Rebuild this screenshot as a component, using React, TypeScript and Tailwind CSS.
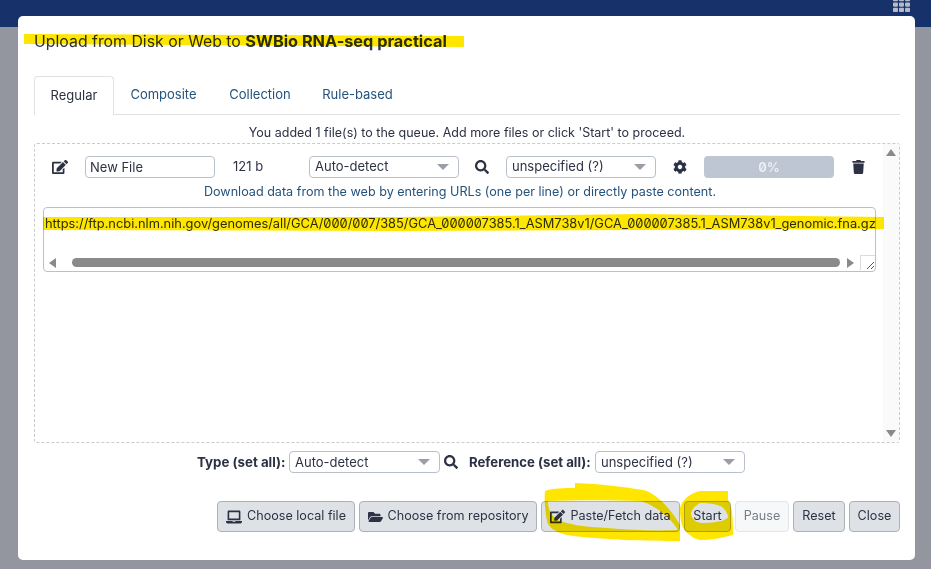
import { FaEdit, FaSearch, FaCog, FaTrash, FaLaptop, FaFolderOpen, FaTh } from 'react-icons/fa';

const Select = ({ label, className }: { label: string; className: string }) => (
  <div className={`flex items-center justify-between border border-[#b9c0ca] rounded-[4px] pl-[5px] pr-[9px] bg-white text-[13px] text-[#2c3143] ${className}`}>
    <span className="pt-[1px]">{label}</span>
    <span className="w-0 h-0 border-l-[6px] border-r-[6px] border-t-[6px] border-l-transparent border-r-transparent border-t-[#9a9ea6]" />
  </div>
);

const Button = ({ icon, label, disabled, className }: { icon?: React.ReactNode; label: string; disabled?: boolean; className: string }) => (
  <button
    className={`h-[31px] flex items-center justify-center gap-[5px] rounded-[4px] border text-[12.6px] ${
      disabled ? 'bg-[#f7f8f9] border-[#e2e5ea] text-[#787d8a]' : 'bg-[#dee2e6] border-[#adb2b9] text-[#2c3143]'
    } ${className}`}
  >
    {icon}
    {label}
  </button>
);

function App() {
  return (
    <div className="relative w-[931px] h-[569px] overflow-hidden bg-[#94969f] slashed-zero font-['Inter',sans-serif]">
      {/* Masthead */}
      <div className="h-[27px] bg-[#17326b] flex justify-end pr-[21px]">
        <FaTh className="w-[17px] h-[17px] -mt-[4px] text-[#b4bac6]" />
      </div>

      {/* Modal */}
      <div className="absolute left-[18px] top-[16px] w-[897px] h-[544px] bg-white rounded-[5px] px-[16px] text-[#2c3143]">
        <h1 className="pt-[15px] h-[60px] text-[15.85px] leading-[20px] text-[#2c3143]">
          Upload from Disk or Web to <b className="font-bold text-[16.3px]">SWBio RNA-seq practical</b>
        </h1>

        {/* Tabs */}
        <div className="flex h-[39px] w-[866px] border-b border-[#dee2e6] text-[13px]">
          <div className="w-[80px] h-[39px] flex items-center justify-center bg-white border border-b-0 border-[#dee2e6] rounded-t-[4px] text-[#2c3143]">Regular</div>
          <div className="w-[99px] flex items-center justify-center text-[#25537b]">Composite</div>
          <div className="w-[94px] flex items-center justify-center text-[#25537b]">Collection</div>
          <div className="w-[101px] flex items-center justify-center text-[#25537b]">Rule-based</div>
        </div>

        <p className="h-[28px] pt-[10px] pl-[1px] text-center text-[12.5px] leading-[16px]">You added 1 file(s) to the queue. Add more files or click 'Start' to proceed.</p>

        {/* Queue */}
        <div className="relative h-[300px] w-[866px] border border-dashed border-[#c8ccd2] rounded-[3px]">
          <div className="flex items-center h-[31px] mt-[7px] text-[13px]">
            <FaEdit className="ml-[17px] w-[16px] h-[16px] text-[#2c3143]" />
            <div className="ml-[17px] w-[130px] h-[22px] border border-[#b9c0ca] rounded-[4px] pl-[4px] leading-[21px]">New File</div>
            <span className="ml-[18px] w-[76px]">121 b</span>
            <Select label="Auto-detect" className="w-[150px] h-[22px]" />
            <FaSearch className="ml-[16px] w-[14px] h-[14px]" />
            <Select label="unspecified (?)" className="ml-[17px] w-[150px] h-[22px]" />
            <FaCog className="ml-[17px] w-[14px] h-[14px]" />
            <div className="ml-[17px] w-[130px] h-[22px] rounded-[4px] bg-[#bdc6d2] text-[#eef1f5] text-center leading-[22px] font-semibold">0%</div>
            <FaTrash className="ml-[18px] w-[13px] h-[14px]" />
          </div>
          <p className="pt-[1px] h-[18px] text-center text-[12.6px] leading-[18px] text-[#25537b] pr-[14px]">Download data from the web by entering URLs (one per line) or directly paste content.</p>

          {/* Textarea */}
          <div className="ml-[8px] mt-[7px] w-[833px] h-[65px] border border-[#b9c0ca] rounded-[4px] flex flex-col justify-between overflow-hidden">
            <div className="pl-[1px] pt-[7px] text-[12.85px] leading-[18px] whitespace-nowrap">https://ftp.ncbi.nlm.nih.gov/genomes/all/GCA/000/007/385/GCA_000007385.1_ASM738v1/GCA_000007385.1_ASM738v1_genomic.fna.gz</div>
            <div className="h-[15px] mb-[1px] flex items-center">
              <span className="ml-[5px] w-0 h-0 border-y-[5px] border-r-[7px] border-y-transparent border-r-[#8a8a8a]" />
              <div className="ml-[16px] w-[770px] h-[9px] rounded-full bg-[#8a8a8a]" />
              <span className="ml-[7px] w-0 h-0 border-y-[5px] border-l-[7px] border-y-transparent border-l-[#8a8a8a]" />
              <div className="ml-[6px] w-[15px] h-[15px] border-l border-t border-[#dcdcdc] flex items-end justify-end">
                <svg width="9" height="9" viewBox="0 0 9 9" stroke="#555" strokeWidth="1"><path d="M1 8 8 1M5 8l3-3" /></svg>
              </div>
            </div>
          </div>

          {/* Queue scrollbar arrows */}
          <div className="absolute right-0 top-0 bottom-0 w-[16px] bg-[#fafafa] flex flex-col items-center justify-between py-[5px]">
            <span className="w-0 h-0 border-x-[5px] border-b-[7px] border-x-transparent border-b-[#8a8a8a]" />
            <span className="w-0 h-0 border-x-[5px] border-t-[7px] border-x-transparent border-t-[#8a8a8a]" />
          </div>
        </div>

        {/* Set all */}
        <div className="flex items-center h-[22px] mt-[8px] ml-[163px] text-[13px]">
          <b className="w-[92px] pt-[1px] font-bold text-[13.3px] whitespace-nowrap">Type (set all):</b>
          <Select label="Auto-detect" className="w-[151px] h-[22px]" />
          <FaSearch className="ml-[4px] w-[14px] h-[14px]" />
          <b className="ml-[11px] w-[126px] pt-[1px] font-bold text-[13.2px] whitespace-nowrap">Reference (set all):</b>
          <Select label="unspecified (?)" className="w-[150px] h-[22px]" />
        </div>

        {/* Actions */}
        <div className="flex justify-end gap-[4px] w-[866px] mt-[28px]">
          <Button icon={<FaLaptop className="w-[16px] h-[14px]" />} label="Choose local file" className="w-[138px]" />
          <Button icon={<FaFolderOpen className="w-[15px] h-[14px]" />} label="Choose from repository" className="w-[178px]" />
          <Button icon={<FaEdit className="w-[15px] h-[15px]" />} label="Paste/Fetch data" className="w-[139px]" />
          <Button label="Start" className="w-[47px]" />
          <Button label="Pause" disabled className="w-[54px]" />
          <Button label="Reset" className="w-[52px]" />
          <Button label="Close" className="w-[51px]" />
        </div>
      </div>

      {/* Yellow marker annotations */}
      <svg className="absolute inset-0 mix-blend-multiply pointer-events-none" width="931" height="569" viewBox="0 0 931 569">
        <path d="M24 34 464 36 464 47 24 44Z" fill="#ffe600" />
        <path d="M43 217 400 217 640 214 884 217 884 229 640 230 400 231 43 230Z" fill="#ffe600" />
        <path d="M545 491C552 488 565 488 575 488L575 483C600 484 625 487 643 490C655 492 672 510 680 525L680 541C650 541 600 540 567 535C555 532 548 527 547 521C545 510 544 500 545 491ZM548 501C548 508 550 516 560 521C575 526 590 527 607 528C630 530 655 531 678 530C668 514 650 503 640 501C610 500 575 500 548 501Z" fill="#ffe600" fillRule="evenodd" />
        <path d="M680 508C682 500 690 493 700 491L728 491 728 500C731 505 733 510 733 535C722 538 710 540 700 540C695 539 692 537 690 535C684 531 680 526 680 508ZM691 513C691 518 695 523 703 523C710 523 716 522 722 521C726 519 729 518 728 516C726 510 722 506 720 506C713 503 705 503 700 503C695 506 692 509 691 513Z" fill="#ffe600" fillRule="evenodd" />
      </svg>
    </div>
  );
}

export default App;
